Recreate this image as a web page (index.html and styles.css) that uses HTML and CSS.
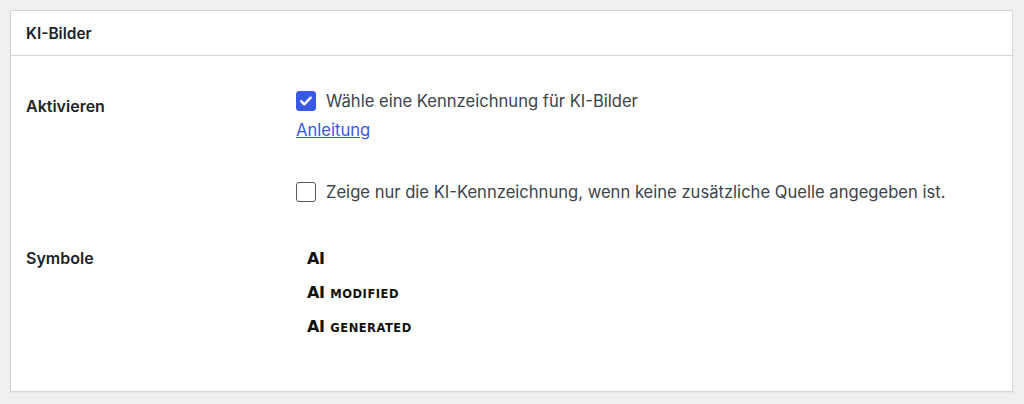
FILE: index.html
```html
<!DOCTYPE html>
<html lang="de">
<head>
<meta charset="utf-8">
<link rel="stylesheet" href="styles.css">
</head>
<body>
<div class="card">
  <div class="card-head">KI-Bilder</div>
  <div class="card-body">
    <div class="row row-activate">
      <div class="label">Aktivieren</div>
      <div class="field">
        <label class="check"><span class="box checked"><svg viewBox="0 0 20 20" width="20" height="20"><path d="M5.2 10.2l3.1 3.1 6.4-6.6" fill="none" stroke="#fff" stroke-width="2.4" stroke-linecap="round" stroke-linejoin="round"/></svg></span><span>Wähle eine Kennzeichnung für KI-Bilder</span></label>
        <a class="link" href="#">Anleitung</a>
        <label class="check check-second"><span class="box"></span><span>Zeige nur die KI-Kennzeichnung, wenn keine zusätzliche Quelle angegeben ist.</span></label>
      </div>
    </div>
    <div class="row row-symbols">
      <div class="label">Symbole</div>
      <div class="field symbols">
        <div class="sym"><span class="ai">AI</span></div>
        <div class="sym"><span class="ai">AI</span><span class="tag">MODIFIED</span></div>
        <div class="sym"><span class="ai">AI</span><span class="tag">GENERATED</span></div>
      </div>
    </div>
  </div>
</div>
</body>
</html>
```

FILE: styles.css
```css
html, body {
  margin: 0;
  padding: 0;
  background: #f0f0f1;
}
body {
  padding: 10px 11px 11px 10px;
  font-family: Inter, "Liberation Sans", Arial, sans-serif;
  color: #1d2327;
}
.card {
  background: #fff;
  border: 1px solid #d5d5d7;
  box-shadow: 0 1px 1px rgba(0,0,0,0.04);
  height: 382px;
  box-sizing: border-box;
}
.card-head {
  height: 45px;
  box-sizing: border-box;
  border-bottom: 1px solid #d5d5d7;
  padding: 13px 0 0 15px;
  font-size: 15.5px;
  font-weight: 600;
  color: #1d2327;
}
.card-body {
  padding: 35px 0 0 15px;
}
.row {
  display: flex;
}
.label {
  width: 270px;
  font-size: 16px;
  font-weight: 600;
  color: #1d2327;
  padding-top: 5px;
}
.field {
  display: flex;
  flex-direction: column;
  align-items: flex-start;
}
.check {
  display: flex;
  align-items: center;
  gap: 10px;
  font-size: 16.6px;
  color: #3c434a;
  height: 20px;
}
.box {
  width: 20px;
  height: 20px;
  box-sizing: border-box;
  border: 1.5px solid #50575e;
  border-radius: 3px;
  background: #fff;
  display: flex;
  flex: none;
}
.box.checked {
  background: #3858e9;
  border-color: #3858e9;
}
.box.checked svg {
  margin: -1.5px;
}
.link {
  margin-top: 9px;
  font-size: 16.6px;
  color: #3858e9;
  text-decoration: underline;
}
.check-second {
  margin-top: 42px;
}
.row-symbols {
  margin-top: 43px;
}
.row-symbols .label {
  padding-top: 3px;
}
.symbols {
  padding-left: 11px;
  padding-top: 4px;
  gap: 15px;
}
.sym {
  display: flex;
  align-items: baseline;
  gap: 6px;
  height: 19px;
}
.ai {
  font-family: "DejaVu Sans", sans-serif;
  font-weight: bold;
  font-size: 16px;
  color: #111;
  letter-spacing: -0.5px;
}
.tag {
  font-family: "DejaVu Sans", sans-serif;
  font-weight: bold;
  font-size: 11.5px;
  letter-spacing: 0.5px;
  color: #111;
}
```
